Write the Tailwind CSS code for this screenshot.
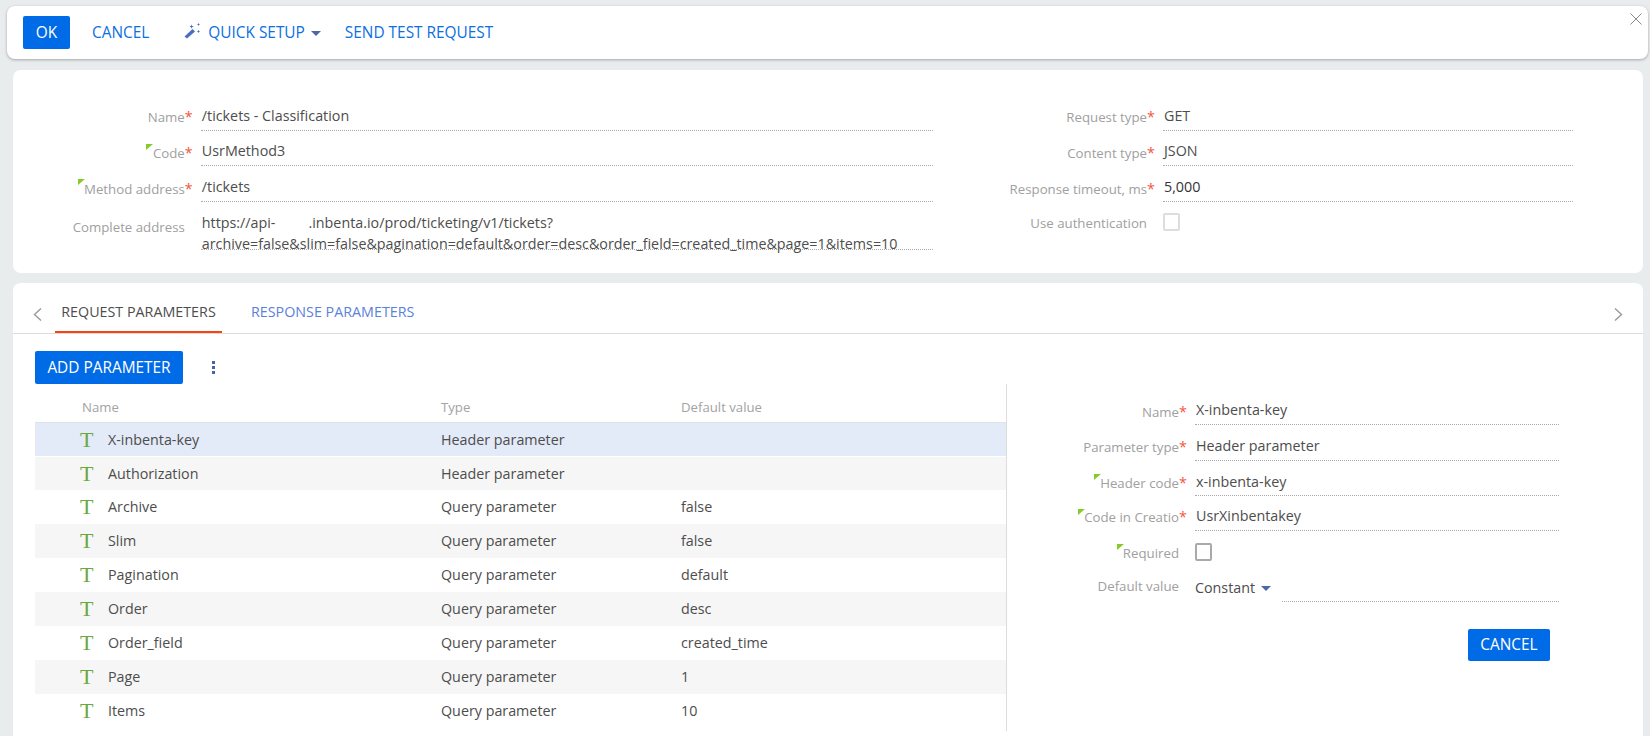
<!DOCTYPE html>
<html><head><meta charset="utf-8"><script src="https://cdn.jsdelivr.net/npm/@tailwindcss/browser@4"></script></head>
<body class="m-0 bg-[#e9eced]">
<div class="w-[1650px] h-[736px] overflow-hidden font-['Open_Sans',sans-serif] text-[14.3px] text-[#4d4d4d] flex flex-col">
  <!-- toolbar -->
  <div class="relative mt-[6px] ml-[7px] w-[1641px] h-[53px] shrink-0 bg-white rounded-[8px] shadow-[0_1px_3px_rgba(0,0,0,0.3)] flex items-center pl-[16px] text-[15.4px] text-[#0d6fe0]">
    <div class="w-[47px] h-[33px] bg-[#006be6] rounded-[2px] text-white flex items-center justify-center">OK</div>
    <div class="ml-[22px]">CANCEL</div>
    <svg class="ml-[35px] mt-[-3px]" width="18" height="16" viewBox="0 0 18 16"><path d="M0.5 13.5 L8.5 6 L11 8.5 L3 15.5 Z" fill="#4a6fc0"/><path d="M7 3 l.6-1.6.6 1.6 1.6.6-1.6.6-.6 1.6-.6-1.6-1.6-.6z M14 1 l.5-1 .5 1 1 .5-1 .5-.5 1-.5-1-1-.5z M14 8 l.5-1.2.5 1.2 1.2.5-1.2.5-.5 1.2-.5-1.2-1.2-.5z" fill="#4a6fc0"/></svg>
    <div class="ml-[6px]">QUICK SETUP</div>
    <div class="ml-[6px] mt-[1px] w-0 h-0 border-x-[5px] border-x-transparent border-t-[5px] border-t-[#4a6aa5]"></div>
    <div class="ml-[24px]">SEND TEST REQUEST</div>
    <svg class="absolute top-[7px] right-[6px]" width="12" height="12" viewBox="0 0 12 12"><path d="M0.5 0.5 L11.5 11.5 M11.5 0.5 L0.5 11.5" stroke="#8a8a8a" stroke-width="1" fill="none"/></svg>
  </div>
  <!-- main card -->
  <div class="mt-[11px] ml-[13px] w-[1630px] h-[203px] shrink-0 bg-white rounded-[8px] pt-[26px] flex">
    <div class="w-[920px] shrink-0">
      <div class="flex h-[35px]">
        <div class="w-[172px] text-right text-[#a0a0a0] text-[13.25px] pt-[11px] leading-[20px]">Name</div><div class="w-[16px] text-[#f5533d] pt-[11px] leading-[20px]">*</div>
        <div class="w-[733px] border-b border-dotted border-[#aaa] pl-[1px] pt-[10px] leading-[20px]">/tickets - Classification</div>
      </div>
      <div class="flex h-[35px]">
        <div class="relative w-[172px] text-right text-[#a0a0a0] text-[13.25px] pt-[12px] leading-[20px]">Code<div class="absolute top-[13px] right-[32px] w-0 h-0 border-t-[6px] border-t-[#84cc29] border-r-[7px] border-r-transparent"></div></div><div class="w-[16px] text-[#f5533d] pt-[12px] leading-[20px]">*</div>
        <div class="w-[733px] border-b border-dotted border-[#aaa] pl-[1px] pt-[10px] leading-[20px]">UsrMethod3</div>
      </div>
      <div class="flex h-[36px]">
        <div class="relative w-[172px] text-right text-[#a0a0a0] text-[13.25px] pt-[13px] leading-[20px]">Method address<div class="absolute top-[13px] right-[100px] w-0 h-0 border-t-[6px] border-t-[#84cc29] border-r-[7px] border-r-transparent"></div></div><div class="w-[16px] text-[#f5533d] pt-[13px] leading-[20px]">*</div>
        <div class="w-[733px] border-b border-dotted border-[#aaa] pl-[1px] pt-[11px] leading-[20px]">/tickets</div>
      </div>
      <div class="flex h-[48px]">
        <div class="w-[172px] text-right text-[#a0a0a0] text-[13.25px] pt-[15px] leading-[20px]">Complete address</div><div class="w-[16px]"></div>
        <div class="w-[733px] border-b border-dotted border-[#aaa] pl-[1px] pt-[10px] leading-[21px] whitespace-nowrap"><span class="block">https://api-<span class="inline-block w-[33px]"></span>.inbenta.io/prod/ticketing/v1/tickets?</span><span class="block">archive=false&amp;slim=false&amp;pagination=default&amp;order=desc&amp;order_field=created_time&amp;page=1&amp;items=10</span></div>
      </div>
    </div>
    <div class="w-[642px] shrink-0 ml-[0px]">
      <div class="flex h-[35px]">
        <div class="w-[214px] text-right text-[#a0a0a0] text-[13.25px] pt-[11px] leading-[20px]">Request type</div><div class="w-[16px] text-[#f5533d] pt-[11px] leading-[20px]">*</div>
        <div class="w-[410px] border-b border-dotted border-[#aaa] pl-[1px] pt-[10px] leading-[20px]">GET</div>
      </div>
      <div class="flex h-[35px]">
        <div class="w-[214px] text-right text-[#a0a0a0] text-[13.25px] pt-[12px] leading-[20px]">Content type</div><div class="w-[16px] text-[#f5533d] pt-[12px] leading-[20px]">*</div>
        <div class="w-[410px] border-b border-dotted border-[#aaa] pl-[1px] pt-[10px] leading-[20px]">JSON</div>
      </div>
      <div class="flex h-[36px]">
        <div class="w-[214px] text-right text-[#a0a0a0] text-[13.25px] pt-[13px] leading-[20px]">Response timeout, ms</div><div class="w-[16px] text-[#f5533d] pt-[13px] leading-[20px]">*</div>
        <div class="w-[410px] border-b border-dotted border-[#aaa] pl-[1px] pt-[11px] leading-[20px] text-[#333]">5,000</div>
      </div>
      <div class="flex h-[48px]">
        <div class="w-[214px] text-right text-[#a0a0a0] text-[13.25px] pt-[11px] leading-[20px]">Use authentication</div><div class="w-[16px]"></div>
        <div class="pt-[11px]"><div class="w-[17px] h-[18px] border-2 border-[#ddd] rounded-[2px]"></div></div>
      </div>
    </div>
  </div>
  <!-- detail card -->
  <div class="mt-[10px] ml-[13px] w-[1630px] h-[460px] shrink-0 bg-white rounded-t-[8px] flex flex-col">
    <div class="h-[51px] shrink-0 border-b border-[#dcdcdc] flex relative">
      <svg class="ml-[20px] mt-[25px]" width="9" height="13" viewBox="0 0 9 13"><path d="M8 0.5 L1.5 6.5 L8 12.5" stroke="#999" stroke-width="1.4" fill="none"/></svg>
      <div class="ml-[13px] w-[167px] h-[50px] border-b-2 border-[#ff4013] flex justify-center pt-[19px] leading-[20px]">REQUEST PARAMETERS</div>
      <div class="ml-[29px] pt-[19px] leading-[20px] text-[#5a82da]">RESPONSE PARAMETERS</div>
      <svg class="absolute left-[1601px] top-[25px]" width="9" height="13" viewBox="0 0 9 13"><path d="M1 0.5 L7.5 6.5 L1 12.5" stroke="#999" stroke-width="1.4" fill="none"/></svg>
    </div>
    <div class="flex-1 flex">
      <div class="w-[971px] ml-[22px] mt-[17px] shrink-0">
        <div class="flex items-center h-[33px]">
          <div class="w-[148px] h-[33px] bg-[#006be6] rounded-[2px] text-white text-[15.4px] flex items-center justify-center">ADD PARAMETER</div>
          <div class="ml-[29px] flex flex-col gap-[2px]"><span class="w-[3px] h-[3px] bg-[#4a61b0]"></span><span class="w-[3px] h-[3px] bg-[#4a61b0]"></span><span class="w-[3px] h-[3px] bg-[#4a61b0]"></span></div>
        </div>
        <div class="h-[39px] border-b border-[#dfe3e6] flex items-center pt-[9px] text-[13.2px] text-[#a3a3a3]"><div class="w-[406px] pl-[47px]">Name</div><div class="w-[240px]">Type</div><div>Default value</div></div>
        <div class="flex flex-col">
          <div class="h-[33px] bg-[#e3eaf8] flex items-center"><div class="w-[73px] pl-[45px] font-['Liberation_Serif',serif] text-[#6aa83c] text-[22px] leading-none">T</div><div class="w-[333px]">X-inbenta-key</div><div class="w-[240px]">Header parameter</div><div></div></div>
          <div class="h-[33px] mt-[1px] bg-[#f6f6f6] flex items-center"><div class="w-[73px] pl-[45px] font-['Liberation_Serif',serif] text-[#6aa83c] text-[22px] leading-none">T</div><div class="w-[333px]">Authorization</div><div class="w-[240px]">Header parameter</div><div></div></div>
          <div class="h-[34px] flex items-center"><div class="w-[73px] pl-[45px] font-['Liberation_Serif',serif] text-[#6aa83c] text-[22px] leading-none">T</div><div class="w-[333px]">Archive</div><div class="w-[240px]">Query parameter</div><div>false</div></div>
          <div class="h-[34px] bg-[#f6f6f6] flex items-center"><div class="w-[73px] pl-[45px] font-['Liberation_Serif',serif] text-[#6aa83c] text-[22px] leading-none">T</div><div class="w-[333px]">Slim</div><div class="w-[240px]">Query parameter</div><div>false</div></div>
          <div class="h-[34px] flex items-center"><div class="w-[73px] pl-[45px] font-['Liberation_Serif',serif] text-[#6aa83c] text-[22px] leading-none">T</div><div class="w-[333px]">Pagination</div><div class="w-[240px]">Query parameter</div><div>default</div></div>
          <div class="h-[34px] bg-[#f6f6f6] flex items-center"><div class="w-[73px] pl-[45px] font-['Liberation_Serif',serif] text-[#6aa83c] text-[22px] leading-none">T</div><div class="w-[333px]">Order</div><div class="w-[240px]">Query parameter</div><div>desc</div></div>
          <div class="h-[34px] flex items-center"><div class="w-[73px] pl-[45px] font-['Liberation_Serif',serif] text-[#6aa83c] text-[22px] leading-none">T</div><div class="w-[333px]">Order_field</div><div class="w-[240px]">Query parameter</div><div>created_time</div></div>
          <div class="h-[34px] bg-[#f6f6f6] flex items-center"><div class="w-[73px] pl-[45px] font-['Liberation_Serif',serif] text-[#6aa83c] text-[22px] leading-none">T</div><div class="w-[333px]">Page</div><div class="w-[240px]">Query parameter</div><div>1</div></div>
          <div class="h-[34px] flex items-center"><div class="w-[73px] pl-[45px] font-['Liberation_Serif',serif] text-[#6aa83c] text-[22px] leading-none">T</div><div class="w-[333px]">Items</div><div class="w-[240px]">Query parameter</div><div>10</div></div>
        </div>
      </div>
      <!-- side form -->
      <div class="mt-[50px] h-[347px] border-l border-[#dcdcdc] w-[600px] shrink-0 pt-[8px]">
        <div class="flex h-[33px]">
          <div class="w-[172px] text-right text-[#a0a0a0] pt-[10px] leading-[20px] text-[13.25px]">Name</div><div class="w-[16px] text-[#f5533d] pt-[10px] leading-[20px]">*</div>
          <div class="w-[364px] border-b border-dotted border-[#aaa] pl-[1px] pt-[8px] leading-[20px]">X-inbenta-key</div>
        </div>
        <div class="flex h-[36px]">
          <div class="w-[172px] text-right text-[#a0a0a0] pt-[12px] leading-[20px] text-[13.25px]">Parameter type</div><div class="w-[16px] text-[#f5533d] pt-[12px] leading-[20px]">*</div>
          <div class="w-[364px] border-b border-dotted border-[#aaa] pl-[1px] pt-[11px] leading-[20px]">Header parameter</div>
        </div>
        <div class="flex h-[35px]">
          <div class="relative w-[172px] text-right text-[#a0a0a0] pt-[12px] leading-[20px] text-[13.25px]">Header code<div class="absolute top-[13px] right-[78px] w-0 h-0 border-t-[6px] border-t-[#84cc29] border-r-[7px] border-r-transparent"></div></div><div class="w-[16px] text-[#f5533d] pt-[12px] leading-[20px]">*</div>
          <div class="w-[364px] border-b border-dotted border-[#aaa] pl-[1px] pt-[11px] leading-[20px]">x-inbenta-key</div>
        </div>
        <div class="flex h-[35px]">
          <div class="relative w-[172px] text-right text-[#a0a0a0] pt-[11px] leading-[20px] text-[13.25px]">Code in Creatio<div class="absolute top-[13px] right-[94px] w-0 h-0 border-t-[6px] border-t-[#84cc29] border-r-[7px] border-r-transparent"></div></div><div class="w-[16px] text-[#f5533d] pt-[11px] leading-[20px]">*</div>
          <div class="w-[364px] border-b border-dotted border-[#aaa] pl-[1px] pt-[10px] leading-[20px]">UsrXinbentakey</div>
        </div>
        <div class="flex h-[36px]">
          <div class="relative w-[172px] text-right text-[#a0a0a0] pt-[12px] leading-[20px] text-[13.25px]">Required<div class="absolute top-[13px] right-[55px] w-0 h-0 border-t-[6px] border-t-[#84cc29] border-r-[7px] border-r-transparent"></div></div><div class="w-[16px]"></div>
          <div class="pt-[12px]"><div class="w-[17px] h-[18px] border-2 border-[#aaa] rounded-[2px]"></div></div>
        </div>
        <div class="flex h-[35px]">
          <div class="w-[172px] text-right text-[#a0a0a0] pt-[9px] leading-[20px] text-[13.25px]">Default value</div><div class="w-[16px]"></div>
          <div class="w-[87px] flex items-start pt-[11px] leading-[20px]">Constant<span class="ml-[6px] mt-[8px] w-0 h-0 border-x-[5px] border-x-transparent border-t-[5px] border-t-[#4a6aa5]"></span></div>
          <div class="w-[277px] border-b border-dotted border-[#aaa]"></div>
        </div>
        <div class="mt-[27px] ml-[461px] w-[82px] h-[32px] bg-[#006be6] rounded-[2px] text-white text-[15.4px] flex items-center justify-center">CANCEL</div>
      </div>
    </div>
  </div>
</div>
</body></html>
